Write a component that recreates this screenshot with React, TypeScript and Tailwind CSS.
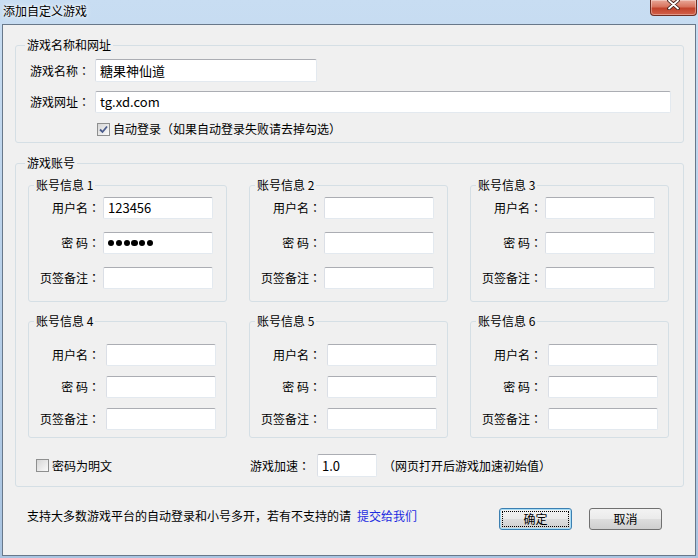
import type { ReactNode } from 'react'

const inputCls =
  'h-[22px] bg-white border border-[#e3e9ef] border-t-[#abadb3] border-l-[#dbdfe6] rounded-[2px] flex items-center px-[4px] text-[13px] leading-[16px] text-black'

// full-width colon drawn with the JP face so the dot sits centred like the original
const Label = ({ text, className }: { text: string; className?: string }) => (
  <span className={`text-[12px] leading-[16px] text-black ${className ?? ''}`}>
    {text}
    <span className="font-['Noto_Sans_CJK_JP',sans-serif]">：</span>
  </span>
)

const CheckBox = ({ checked }: { checked?: boolean }) => (
  <span className="w-[13px] h-[13px] shrink-0 border border-[#8e8f8f] bg-[linear-gradient(135deg,#d6d6d6,#fafafa)] flex items-center justify-center">
    {checked && (
      <svg width="11" height="11" viewBox="0 0 11 11">
        <path d="M2 5.5 L4.5 8 L9 2.5" fill="none" stroke="#4b5c8c" strokeWidth="1.8" />
      </svg>
    )}
  </span>
)

const Dots = ({ count }: { count: number }) => (
  <span className="flex items-center gap-[1.6px]">
    {Array.from({ length: count }).map((_, i) => (
      <span key={i} className="w-[6.2px] h-[6.2px] rounded-full bg-black" />
    ))}
  </span>
)

interface AccountBoxProps {
  n: number
  row: 1 | 2
  user?: string
  pwd?: number
}

// 账号信息 sub group; the two rows are spaced a bit differently in the original dialog
const AccountBox = ({ n, row, user, pwd }: AccountBoxProps) => {
  const fields: [string, ReactNode][] = [
    ['用户名', user],
    ['密 码', pwd ? <Dots count={pwd} /> : null],
    ['页签备注', null],
  ]
  return (
    <fieldset
      className={`w-[199px] border border-[#d5dfe5] rounded-[3px] ${row === 1 ? 'pb-[12px]' : 'pb-[7px]'}`}
    >
      <legend className="ml-[5px] px-[2px] text-[12px] leading-[16px] text-black">账号信息 {n}</legend>
      <div className={`flex flex-col ${row === 1 ? 'mt-[4px] gap-[13px]' : 'mt-[15px] gap-[10px]'}`}>
        {fields.map(([label, val]) => (
          <div key={label} className="flex items-center">
            <Label text={label} className="w-[71px] text-right" />
            <div className={`${inputCls} w-[110px] ${row === 1 ? 'ml-[3px]' : 'ml-[6px]'}`}>{val}</div>
          </div>
        ))}
      </div>
    </fieldset>
  )
}

const Button = ({ children, primary }: { children: ReactNode; primary?: boolean }) => (
  <button
    type="button"
    className={`w-[73px] h-[22px] rounded-[3px] border p-[2px] flex text-[12px] leading-[16px] text-black bg-[linear-gradient(#f3f3f3_0%,#ebebeb_48%,#dddddd_52%,#cfcfcf_100%)] ${
      primary ? 'border-[#3c7fb1] shadow-[inset_0_0_0_1px_#a7dcf5]' : 'border-[#707070]'
    }`}
  >
    <span
      className={`flex-1 flex items-center justify-center border ${
        primary ? 'border-dotted border-black' : 'border-transparent'
      }`}
    >
      {children}
    </span>
  </button>
)

export default function App() {
  return (
    <div className="w-[698px] h-[558px] flex flex-col overflow-hidden bg-linear-to-b from-[#c8ddf2] to-[#a9c4e1] font-['Noto_Sans_CJK_SC',sans-serif]">
      <div className="h-[24px] shrink-0 flex items-start justify-between">
        <span className="ml-[3px] mt-[3px] text-[12px] leading-[16px] text-black [text-shadow:0_0_6px_#ffffff,0_0_3px_#ffffff]">
          添加自定义游戏
        </span>
        <div className="w-[47px] h-[16px] mr-[1px] rounded-b-[4px] border border-t-0 border-[#6e2d22] bg-[linear-gradient(#e9a898_0%,#d8735d_45%,#c2432b_55%,#d3604a_100%)] shadow-[inset_0_0_0_1px_rgba(255,255,255,0.35)] flex justify-center">
          <svg width="13" height="10" viewBox="0 0 13 10">
            <path d="M2 0.5 L11 8.5 M11 0.5 L2 8.5" stroke="#3b1b16" strokeWidth="3.6" strokeLinecap="round" />
            <path d="M2 0.5 L11 8.5 M11 0.5 L2 8.5" stroke="#ffffff" strokeWidth="1.8" strokeLinecap="round" />
          </svg>
        </div>
      </div>

      <div className="mx-[2px] h-[532px] shrink-0 border border-[#68788a] bg-[#f0f0f0] flex flex-col">
        <fieldset className="ml-[12px] mr-[11px] mt-[12px] border border-[#d5dfe5] rounded-[3px] pb-[5px]">
          <legend className="ml-[9px] px-[2px] text-[12px] leading-[16px] text-black">游戏名称和网址</legend>
          <div className="pl-[14px]">
            <div className="mt-[6px] flex items-center">
              <Label text="游戏名称" className="w-[65px]" />
              <div className={`${inputCls} w-[222px] h-[23px]`}>糖果神仙道</div>
            </div>
            <div className="mt-[9px] flex items-center">
              <Label text="游戏网址" className="w-[65px]" />
              <div className={`${inputCls} w-[576px]`}>tg.xd.com</div>
            </div>
            <div className="mt-[8px] h-[16px] pl-[67px] flex items-center gap-[3px]">
              <CheckBox checked />
              <span className="text-[12px] leading-[16px] text-black">自动登录（如果自动登录失败请去掉勾选）</span>
            </div>
          </div>
        </fieldset>

        <fieldset className="ml-[12px] mr-[11px] mt-[12px] border border-[#d5dfe5] rounded-[3px] pb-[9px]">
          <legend className="ml-[9px] px-[2px] text-[12px] leading-[16px] text-black">游戏账号</legend>
          <div className="pl-[12px]">
            <div className="mt-[6px] flex gap-[22px]">
              <AccountBox n={1} row={1} user="123456" pwd={6} />
              <AccountBox n={2} row={1} />
              <AccountBox n={3} row={1} />
            </div>
            <div className="mt-[11px] flex gap-[22px]">
              <AccountBox n={4} row={2} />
              <AccountBox n={5} row={2} />
              <AccountBox n={6} row={2} />
            </div>
            <div className="mt-[16px] pl-[8px] h-[23px] flex items-center">
              <div className="w-[214px] flex items-center gap-[3px]">
                <CheckBox />
                <span className="text-[12px] leading-[16px] text-black">密码为明文</span>
              </div>
              <Label text="游戏加速" className="w-[67px]" />
              <div className={`${inputCls} w-[60px] h-[23px]`}>1.0</div>
              <span className="ml-[6px] text-[12px] leading-[16px] text-black">（网页打开后游戏加速初始值）</span>
            </div>
          </div>
        </fieldset>

        <div className="mt-[21px] pl-[24px] mr-[33px] flex items-start">
          <span className="text-[12px] leading-[16px] text-black">支持大多数游戏平台的自动登录和小号多开，若有不支持的请</span>
          <a className="ml-[6px] text-[12px] leading-[16px] text-[#1c2ce0] cursor-pointer">提交给我们</a>
          <div className="ml-auto flex gap-[17px]">
            <Button primary>确定</Button>
            <Button>取消</Button>
          </div>
        </div>
      </div>
    </div>
  )
}
